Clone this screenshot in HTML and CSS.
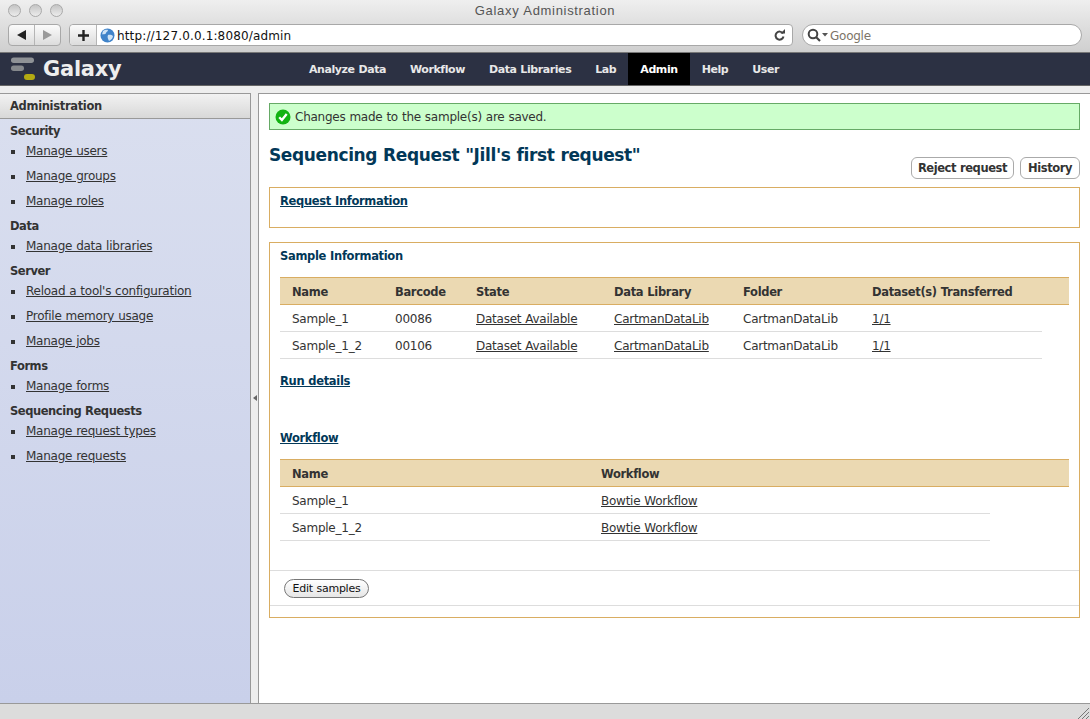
FILE: index.html
```html
<!DOCTYPE html>
<html lang="en">
<head>
    <meta charset="UTF-8">
    <title>Galaxy Administration</title>
    <link rel="stylesheet" href="styles.css">
</head>
<body>
    <div class="window">
        <div class="titlebar">
            <div class="lights"><span></span><span></span><span></span></div>
            <div class="title">Galaxy Administration</div>
        </div>
        <div class="toolbar">
            <div class="nav-btns">
                <div class="nav-btn"><svg width="11" height="10" viewBox="0 0 11 10"><path d="M1 5L10 0V10Z" fill="#222"/></svg></div>
                <div class="nav-btn"><svg width="11" height="10" viewBox="0 0 11 10"><path d="M10 5L1 0V10Z" fill="#999"/></svg></div>
            </div>
            <div class="urlbar">
                <div class="plus"><svg width="11" height="11" viewBox="0 0 11 11"><path d="M4.300 0h2.400v4.300H11v2.400H6.700V11H4.300V6.700H0V4.300h4.300z" fill="#222"/></svg></div>
                <svg class="globe" width="15" height="15" viewBox="0 0 15 15">
                    <circle cx="7.500" cy="7.500" r="7" fill="#3f83c9"/>
                    <path d="M3 3c2-1.500 4-1.500 5-1 0 2-2 1.500-2 3S3 6 2 6.500ZM8 7c2-.5 4 0 5 1 0 2-2 4-4 5-1-2-2-4-1-6Z" fill="#cfe3f5"/>
                </svg>
                <span class="url">http://127.0.0.1:8080/admin</span>
                <svg class="reload" width="11" height="12" viewBox="0 0 11 12"><path d="M9 4.500A4 4 0 1 0 9.500 7.500" fill="none" stroke="#444" stroke-width="2"/><path d="M6.500 4.500H11V0Z" fill="#444"/></svg>
            </div>
            <div class="searchbar">
                <svg width="22" height="14" viewBox="0 0 22 14"><circle cx="6" cy="6" r="4.300" fill="none" stroke="#444" stroke-width="2"/><path d="M9 9l4 4" stroke="#444" stroke-width="2.200"/><path d="M15 5h6l-3 3.500z" fill="#555"/></svg>
                <span class="search-text">Google</span>
            </div>
        </div>

        <div class="masthead">
            <div class="brand">
                <svg width="28" height="26" viewBox="0 0 28 26">
                    <rect x="1" y="1.500" width="23" height="5.500" rx="2.700" fill="#8f9296"/>
                    <rect x="1" y="9.500" width="13" height="5.500" rx="2.700" fill="#85888c"/>
                    <rect x="14" y="18" width="11" height="6" rx="3" fill="#b3aa12"/>
                </svg>
                <span>Galaxy</span>
            </div>
            <nav class="tabs">
                <a>Analyze Data</a>
                <a>Workflow</a>
                <a>Data Libraries</a>
                <a>Lab</a>
                <a class="active">Admin</a>
                <a>Help</a>
                <a>User</a>
            </nav>
        </div>

        <div class="main">
            <aside class="sidebar">
                <div class="panel-header">Administration</div>
                <div class="toolTitle">Security</div>
                <ul>
                    <li><a href="#">Manage users</a></li>
                    <li><a href="#">Manage groups</a></li>
                    <li><a href="#">Manage roles</a></li>
                </ul>
                <div class="toolTitle">Data</div>
                <ul>
                    <li><a href="#">Manage data libraries</a></li>
                </ul>
                <div class="toolTitle">Server</div>
                <ul>
                    <li><a href="#">Reload a tool's configuration</a></li>
                    <li><a href="#">Profile memory usage</a></li>
                    <li><a href="#">Manage jobs</a></li>
                </ul>
                <div class="toolTitle">Forms</div>
                <ul>
                    <li><a href="#">Manage forms</a></li>
                </ul>
                <div class="toolTitle">Sequencing Requests</div>
                <ul>
                    <li><a href="#">Manage request types</a></li>
                    <li><a href="#">Manage requests</a></li>
                </ul>
            </aside>
            <div class="splitter"><span class="handle"></span></div>
            <main class="content">
                <div class="donemessage">
                    <svg width="16" height="16" viewBox="0 0 16 16"><circle cx="8" cy="8" r="7.500" fill="#12b312"/><path d="M4.200 8.200l2.700 2.800 4.800-6" fill="none" stroke="#fff" stroke-width="2.300"/></svg>
                    <span>Changes made to the sample(s) are saved.</span>
                </div>
                <div class="heading-row">
                    <h2>Sequencing Request "Jill's first request"</h2>
                    <div class="actions">
                        <button type="button">Reject request</button>
                        <button type="button">History</button>
                    </div>
                </div>
                <div class="box request-box">
                    <a class="box-link" href="#">Request Information</a>
                </div>
                <div class="box sample-box">
                    <div class="box-title">Sample Information</div>
                    <table class="grid samples">
                        <colgroup><col class="c1"><col class="c2"><col class="c3"><col class="c4"><col class="c5"><col class="c6"><col class="c7"></colgroup>
                        <tr><th>Name</th><th>Barcode</th><th>State</th><th>Data Library</th><th>Folder</th><th colspan="2">Dataset(s) Transferred</th></tr>
                        <tr><td>Sample_1</td><td>00086</td><td><a href="#">Dataset Available</a></td><td><a href="#">CartmanDataLib</a></td><td>CartmanDataLib</td><td><a href="#">1/1</a></td></tr>
                        <tr><td>Sample_1_2</td><td>00106</td><td><a href="#">Dataset Available</a></td><td><a href="#">CartmanDataLib</a></td><td>CartmanDataLib</td><td><a href="#">1/1</a></td></tr>
                    </table>
                    <a class="box-link run-details" href="#">Run details</a>
                    <a class="box-link workflow-link" href="#">Workflow</a>
                    <table class="grid workflows">
                        <colgroup><col class="w1"><col class="w2"><col class="w3"></colgroup>
                        <tr><th>Name</th><th colspan="2">Workflow</th></tr>
                        <tr><td>Sample_1</td><td><a href="#">Bowtie Workflow</a></td></tr>
                        <tr><td>Sample_1_2</td><td><a href="#">Bowtie Workflow</a></td></tr>
                    </table>
                    <div class="form-row">
                        <button type="button" class="edit-btn">Edit samples</button>
                    </div>
                </div>
            </main>
        </div>

        <div class="statusbar">
            <svg width="12" height="12" viewBox="0 0 12 12"><path d="M1 12L12 1M5 12l7-7M9 12l3-3" stroke="#777" stroke-width="1" fill="none"/></svg>
        </div>
    </div>
</body>
</html>
```

FILE: styles.css
```css
* {
    box-sizing: border-box;
}

html, body {
    margin: 0;
    height: 100%;
    overflow: hidden;
}

body {
    font-family: "DejaVu Sans", sans-serif;
    font-size: 12px;
    letter-spacing: -.25px;
    word-spacing: .4px;
    color: #333;
    background: #fff;
}

.window {
    height: 719px;
    display: flex;
    flex-direction: column;
}

/* browser chrome */
.titlebar {
    height: 20px;
    flex: none;
    display: flex;
    align-items: center;
    justify-content: center;
    position: relative;
    background: linear-gradient(#efefef, #e2e2e2);
}

.title {
    font-family: "Liberation Sans", sans-serif;
    font-size: 13px;
    letter-spacing: .68px;
    color: #555;
}

.lights {
    position: absolute;
    left: 8px;
    top: 4px;
    display: flex;
    gap: 8px;
}

.lights span {
    width: 13px;
    height: 13px;
    border-radius: 50%;
    border: 1px solid #a9a9a9;
    background: linear-gradient(#c4c4c4, #ececec);
}

.toolbar {
    height: 33px;
    flex: none;
    display: flex;
    align-items: flex-start;
    padding: 4px 8px 0;
    background: linear-gradient(#e2e2e2, #cfcfcf);
    border-bottom: 1px solid #777;
}

.nav-btns {
    display: flex;
    width: 53px;
    height: 22px;
    border: 1px solid #a8a8a8;
    border-radius: 4px;
    background: linear-gradient(#fbfbfb, #dcdcdc);
}

.nav-btn {
    flex: 1;
    display: flex;
    align-items: center;
    justify-content: center;
}

.nav-btn + .nav-btn {
    border-left: 1px solid #b5b5b5;
}

.urlbar {
    margin-left: 8px;
    width: 724px;
    height: 22px;
    display: flex;
    align-items: center;
    border: 1px solid #a8a8a8;
    border-radius: 4px;
    background: #fff;
}

.plus {
    width: 27px;
    height: 100%;
    display: flex;
    align-items: center;
    justify-content: center;
    background: linear-gradient(#fbfbfb, #dcdcdc);
    border-right: 1px solid #b5b5b5;
    border-radius: 4px 0 0 4px;
}

.globe {
    margin-left: 3px;
}

.url {
    margin-left: 2px;
    padding-top: 1px;
    flex: 1;
    letter-spacing: .15px;
    color: #111;
}

.reload {
    margin-right: 7px;
}

.searchbar {
    margin-left: 9px;
    width: 280px;
    height: 22px;
    display: flex;
    align-items: center;
    gap: 1px;
    padding-left: 4px;
    border: 1px solid #a8a8a8;
    border-radius: 11px;
    background: #fff;
    color: #7d7468;
}

.search-text {
    padding-top: 1px;
}

/* galaxy masthead */
.masthead {
    height: 32px;
    flex: none;
    display: flex;
    background: #2c3143;
    color: #fff;
}

.brand {
    width: 297px;
    padding-left: 10px;
    display: flex;
    align-items: center;
    gap: 5px;
    font-size: 21px;
    font-weight: bold;
    color: #eee;
}

.tabs {
    display: flex;
}

.tabs a {
    padding: 0 12px;
    display: flex;
    align-items: center;
    font-size: 11px;
    font-weight: bold;
    letter-spacing: -.42px;
    color: #e8e8e8;
}

.tabs a.active {
    background: #000;
    color: #fff;
}

/* page layout */
.main {
    flex: 1;
    display: flex;
    min-height: 0;
    padding-top: 7px;
    background: #eee;
    border-top: 1px solid #666;
}

.sidebar {
    width: 251px;
    flex: none;
    background: linear-gradient(#dadfef, #c9d0ea);
    border-top: 1px solid #999;
    border-right: 1px solid #999;
}

.panel-header {
    height: 25px;
    padding-left: 10px;
    line-height: 24px;
    font-weight: bold;
    color: #333;
    background: linear-gradient(#f2f2f2, #d8d8d8);
    border-bottom: 1px solid #999;
}

.toolTitle {
    margin-top: 5px;
    padding-left: 10px;
    line-height: 15px;
    font-size: 11.5px;
    letter-spacing: -.45px;
    font-weight: bold;
    color: #333;
}

.panel-header, .box-link, .box-title, .grid th {
    font-size: 11.5px;
    letter-spacing: -.33px;
}

.sidebar ul {
    margin: 0;
    padding: 0 0 0 26px;
    list-style: none;
}

.sidebar li {
    position: relative;
    height: 25px;
    line-height: 25px;
}

.sidebar li::before {
    content: "";
    position: absolute;
    left: -15px;
    top: 11px;
    width: 4px;
    height: 4px;
    background: #333;
}

.sidebar a, .grid a {
    color: #333;
    text-decoration: underline;
}

.splitter {
    width: 7px;
    flex: none;
    display: flex;
    align-items: center;
    justify-content: center;
}

.handle {
    width: 0;
    height: 0;
    border: 3px solid transparent;
    border-left-width: 0;
    border-right: 4px solid #666;
}

.content {
    flex: 1;
    padding: 9px 10px 0;
    background: #fff;
    border-top: 1px solid #999;
    border-left: 1px solid #999;
}

.donemessage {
    height: 27px;
    padding-left: 5px;
    display: flex;
    align-items: center;
    gap: 4px;
    color: #333;
    background: #cfc;
    border: 1px solid #6a6;
}

.heading-row {
    height: 57px;
    display: flex;
    justify-content: space-between;
}

h2 {
    margin: 14px 0 0;
    font-size: 17px;
    letter-spacing: -.37px;
    line-height: 22px;
    font-weight: bold;
    color: #023858;
}

.actions {
    padding-top: 27px;
    display: flex;
    gap: 6px;
}

.actions button {
    height: 22px;
    padding: 0 6px;
    font-family: inherit;
    font-size: 11.5px;
    letter-spacing: -.43px;
    font-weight: bold;
    word-spacing: inherit;
    color: #333;
    background: #fff;
    border: 1px solid #aaa;
    border-radius: 6px;
}

.actions button:last-child {
    padding: 0 7px;
}

.box {
    border: 1px solid #d9ad62;
}

.request-box {
    height: 41px;
    padding: 6px 10px;
}

.box-link {
    display: block;
    width: max-content;
    font-weight: bold;
    text-decoration: underline;
    color: #023858;
}

.box-title {
    font-weight: bold;
    color: #023858;
    line-height: 15px;
}

.sample-box {
    margin-top: 14px;
    height: 376px;
    padding: 6px 10px 0;
}

.grid {
    border-collapse: collapse;
    table-layout: fixed;
}

.grid th {
    height: 27px;
    padding: 1px 12px 0;
    text-align: left;
    font-weight: bold;
    color: #333;
    background: #ebd9b2;
    border-top: 1px solid #d9ad62;
    border-bottom: 1px solid #d9ad62;
}

.grid td {
    height: 27px;
    padding: 2px 12px 0;
    border-bottom: 1px solid #ddd;
}

.samples {
    margin-top: 13px;
    width: 789px;
}

.c1 { width: 103px; }
.c2 { width: 81px; }
.c3 { width: 138px; }
.c4 { width: 129px; }
.c5 { width: 129px; }
.c6 { width: 182px; }
.c7 { width: 27px; }

.run-details {
    margin-top: 15px;
}

.workflow-link {
    margin-top: 43px;
}

.workflows {
    margin-top: 14px;
    width: 789px;
}

.w1 { width: 309px; }
.w2 { width: 401px; }
.w3 { width: 79px; }

.form-row {
    margin: 29px -10px 0;
    height: 36px;
    padding-top: 8px;
    border-top: 1px solid #ddd;
    border-bottom: 1px solid #ddd;
}

.edit-btn {
    margin-left: 14px;
    height: 19px;
    padding: 0 7.5px;
    font-family: inherit;
    font-size: 11px;
    letter-spacing: inherit;
    word-spacing: inherit;
    color: #111;
    background: linear-gradient(#fff, #e6e6e6);
    border: 1px solid #777;
    border-radius: 10px;
}

.statusbar {
    height: 16px;
    flex: none;
    display: flex;
    justify-content: flex-end;
    align-items: flex-end;
    padding-right: 1px;
    background: #dcdcdc;
    border-top: 1px solid #999;
}
```
